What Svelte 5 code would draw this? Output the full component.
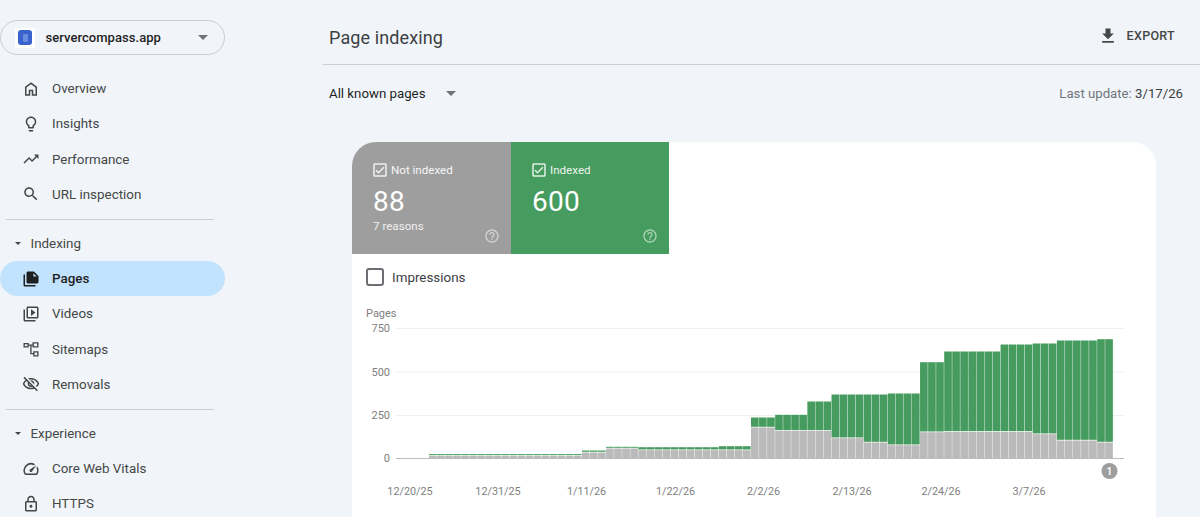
<script>
  const icons = {
    home: 'M6 19h3v-6h6v6h3v-9l-6-4.5L6 10Zm-2 2V9l8-6 8 6v12h-7v-6h-2v6Z',
    bulb: 'M9 21c0 .55.45 1 1 1h4c.55 0 1-.45 1-1v-1H9v1zm3-19C8.14 2 5 5.14 5 9c0 2.38 1.19 4.47 3 5.74V17c0 .55.45 1 1 1h6c.55 0 1-.45 1-1v-2.26c1.81-1.27 3-3.36 3-5.74 0-3.86-3.14-7-7-7zm2.85 11.1l-.85.6V16h-4v-2.3l-.85-.6C7.8 12.16 7 10.63 7 9c0-2.76 2.24-5 5-5s5 2.24 5 5c0 1.63-.8 3.16-2.15 4.1z',
    trend: 'M16 6l2.29 2.29-4.88 4.88-4-4L2 16.59 3.41 18l6-6 4 4 6.3-6.29L22 12V6z',
    search: 'M15.5 14h-.79l-.28-.27C15.41 12.59 16 11.11 16 9.5 16 5.91 13.09 3 9.5 3S3 5.91 3 9.5 5.91 16 9.5 16c1.61 0 3.09-.59 4.23-1.57l.27.28v.79l5 4.99L20.49 19l-4.99-5zm-6 0C7.01 14 5 11.99 5 9.5S7.01 5 9.5 5 14 7.01 14 9.5 11.99 14 9.5 14z',
    pages: 'M4 6H2v14c0 1.1.9 2 2 2h14v-2H4V6zm12-4H8c-1.1 0-2 .9-2 2v12c0 1.1.9 2 2 2h12c1.1 0 2-.9 2-2V8l-6-6zm-.8 6.8V4.4l4.4 4.4h-4.4z',
    video: 'M4 6H2v14c0 1.1.9 2 2 2h14v-2H4V6zm16-4H8c-1.1 0-2 .9-2 2v12c0 1.1.9 2 2 2h12c1.1 0 2-.9 2-2V4c0-1.1-.9-2-2-2zm0 14H8V4h12v12zM12 5.5v9l6-4.5z',
    sitemap: 'M2 4h7v6H2V4zm1.8 1.8v2.4h3.4V5.8H3.8zM14 3h8v7h-8V3zm1.8 1.8v3.4h4.4V4.8h-4.4zM15 15h7v7h-7v-7zm1.8 1.8v3.4h3.4v-3.4h-3.4zM9 6h5v1.8h-1.2V17.2H15V19h-4V7.8H9V6z',
    eyeoff: 'M12 6c3.79 0 7.17 2.13 8.82 5.5-.59 1.22-1.42 2.27-2.41 3.12l1.41 1.41c1.39-1.23 2.49-2.77 3.18-4.53C21.27 7.11 17 4 12 4c-1.27 0-2.49.2-3.64.57l1.65 1.65C10.66 6.09 11.32 6 12 6zm-1.07 1.14L13 9.21c.57.25 1.03.71 1.28 1.28l2.07 2.07c.08-.34.14-.7.14-1.07C16.5 9.01 14.48 7 12 7c-.37 0-.72.05-1.07.14zM2.01 3.87l2.68 2.68C3.06 7.83 1.77 9.53 1 11.5 2.73 15.89 7 19 12 19c1.52 0 2.98-.29 4.32-.82l3.42 3.42 1.41-1.41L3.42 2.45 2.01 3.87zm7.5 7.5l2.61 2.61c-.04.01-.08.02-.12.02-1.38 0-2.5-1.12-2.5-2.5 0-.05.01-.08.01-.13zm-3.4-3.4l1.75 1.75c-.23.55-.36 1.15-.36 1.78 0 2.48 2.02 4.5 4.5 4.5.63 0 1.23-.13 1.77-.36l.98.98c-.88.24-1.8.38-2.75.38-3.79 0-7.17-2.13-8.82-5.5.7-1.43 1.72-2.61 2.93-3.53z',
    speed: 'M20.38 8.57l-1.23 1.85a8 8 0 0 1-.22 7.58H5.07A8 8 0 0 1 15.58 6.85l1.85-1.23A10 10 0 0 0 3.35 19a2 2 0 0 0 1.72 1h13.85a2 2 0 0 0 1.74-1 10 10 0 0 0-.27-10.44zm-9.79 6.84a2 2 0 0 0 2.83 0l5.66-8.49-8.49 5.66a2 2 0 0 0 0 2.83z',
    lock: 'M18 8h-1V6c0-2.76-2.24-5-5-5S7 3.24 7 6v2H6c-1.1 0-2 .9-2 2v10c0 1.1.9 2 2 2h12c1.1 0 2-.9 2-2V10c0-1.1-.9-2-2-2zM9 6c0-1.66 1.34-3 3-3s3 1.34 3 3v2H9V6zm9 14H6V10h12v10zm-6-3c1.1 0 2-.9 2-2s-.9-2-2-2-2 .9-2 2 .9 2 2 2z'
  };
  const download = 'M19 9h-4V3H9v6H5l7 7 7-7zM5 18v2h14v-2H5z';
  const checked = 'M19 3H5c-1.1 0-2 .9-2 2v14c0 1.1.9 2 2 2h14c1.1 0 2-.9 2-2V5c0-1.1-.9-2-2-2zm0 16H5V5h14v14zM17.99 9l-1.41-1.42-6.59 6.59-2.58-2.57-1.42 1.41 4 3.99z';
  const help = 'M11 18h2v-2h-2v2zm1-16C6.48 2 2 6.48 2 12s4.48 10 10 10 10-4.48 10-10S17.52 2 12 2zm0 18c-4.41 0-8-3.59-8-8s3.59-8 8-8 8 3.59 8 8-3.59 8-8 8zm0-14c-2.21 0-4 1.79-4 4h2c0-1.1.9-2 2-2s2 .9 2 2c0 2-3 1.75-3 5h2c0-2.25 3-2.5 3-5 0-2.21-1.79-4-4-4z';

  const groupA = [
    { label: 'Overview', icon: icons.home },
    { label: 'Insights', icon: icons.bulb },
    { label: 'Performance', icon: icons.trend },
    { label: 'URL inspection', icon: icons.search }
  ];
  const groupB = [
    { label: 'Pages', icon: icons.pages, active: true },
    { label: 'Videos', icon: icons.video },
    { label: 'Sitemaps', icon: icons.sitemap },
    { label: 'Removals', icon: icons.eyeoff }
  ];
  const groupC = [
    { label: 'Core Web Vitals', icon: icons.speed },
    { label: 'HTTPS', icon: icons.lock }
  ];

  const segments = [
    [19, 4.4, 2.6], [3, 8, 6], [4, 11.7, 10], [10, 11.3, 8.3], [4, 12.3, 8.3],
    [3, 41, 31], [4, 43.7, 27.7], [3, 57, 27.7], [4, 64, 20.3], [3, 64, 16],
    [4, 65, 13.3], [3, 96.3, 26.3], [7, 107, 26.7], [4, 114, 26.7], [3, 115, 24.3],
    [5, 118, 18], [2, 119.3, 16]
  ];
  const step = 8.05;
  const x0 = 429;
  const base = 458.5;
  const bars = [];
  let n = 0;
  for (const [count, total, gray] of segments) {
    for (let i = 0; i < count; i++) {
      bars.push({ x: x0 + n * step, total, gray });
      n++;
    }
  }
  const grid = [
    { y: 328.5, label: '750' },
    { y: 372, label: '500' },
    { y: 415.5, label: '250' }
  ];
  const dates = [
    ['12/20/25', 410], ['12/31/25', 498], ['1/11/26', 586.5], ['1/22/26', 675.5],
    ['2/2/26', 763.5], ['2/13/26', 852], ['2/24/26', 941], ['3/7/26', 1029]
  ];
</script>

{#snippet navItem(item)}
  <div class="nav-item" class:active={item.active}>
    <svg class="nav-icon" viewBox="0 0 24 24"><path d={item.icon} /></svg>
    <span>{item.label}</span>
  </div>
{/snippet}

{#snippet section(title)}
  <div class="section">
    <span class="tri small"></span>
    <span>{title}</span>
  </div>
{/snippet}

<div class="page">
  <aside class="sidebar">
    <div class="property">
      <span class="favicon"><span class="favicon-inner"></span></span>
      <span class="property-name">servercompass.app</span>
      <span class="tri"></span>
    </div>
    <nav class="group first">
      {#each groupA as item}{@render navItem(item)}{/each}
    </nav>
    <hr />
    {@render section('Indexing')}
    <nav class="group">
      {#each groupB as item}{@render navItem(item)}{/each}
    </nav>
    <hr />
    {@render section('Experience')}
    <nav class="group">
      {#each groupC as item}{@render navItem(item)}{/each}
    </nav>
  </aside>

  <main class="main">
    <header class="head">
      <h1>Page indexing</h1>
      <div class="export">
        <svg viewBox="0 0 24 24"><path d={download} /></svg>
        <span>EXPORT</span>
      </div>
    </header>
    <div class="filter">
      <div class="select"><span>All known pages</span><span class="tri"></span></div>
      <div class="update">Last update: <b>3/17/26</b></div>
    </div>

    <section class="card">
      <div class="tiles">
        <div class="tile gray">
          <div class="tile-label">
            <svg viewBox="0 0 24 24"><path d={checked} /></svg>
            <span>Not indexed</span>
          </div>
          <div class="tile-value">88</div>
          <div class="tile-sub">7 reasons</div>
          <svg class="help" viewBox="0 0 24 24"><path d={help} /></svg>
        </div>
        <div class="tile green">
          <div class="tile-label">
            <svg viewBox="0 0 24 24"><path d={checked} /></svg>
            <span>Indexed</span>
          </div>
          <div class="tile-value">600</div>
          <svg class="help" viewBox="0 0 24 24"><path d={help} /></svg>
        </div>
      </div>
      <div class="impressions">
        <span class="box"></span>
        <span>Impressions</span>
      </div>
      <svg class="chart" viewBox="352 300 804 217" width="804" height="217">
        <text x="366" y="316.5" class="axis">Pages</text>
        {#each grid as g}
          <line x1="395" x2="1124" y1={g.y} y2={g.y} class="gridline" />
          <text x="390" y={g.y + 3.5} text-anchor="end" class="axis">{g.label}</text>
        {/each}
        <text x="390" y="462" text-anchor="end" class="axis">0</text>
        <line x1="396" x2="1124" y1={base} y2={base} class="zero" />
        {#each bars as b}
          <rect x={b.x} y={base - b.total} width={step - 0.4} height={b.total - b.gray - 0.7} class="bar-green" />
          <rect x={b.x} y={base - b.gray} width={step - 0.4} height={b.gray} class="bar-gray" />
        {/each}
        <circle cx="1109.5" cy="471" r="8" class="note" />
        <text x="1109.5" y="475" text-anchor="middle" class="note-text">1</text>
        {#each dates as d}
          <text x={d[1]} y="495" text-anchor="middle" class="axis date">{d[0]}</text>
        {/each}
      </svg>
    </section>
  </main>
</div>

<style>
  :global(body) {
    margin: 0;
    background: #f1f5fa;
    font-family: Roboto, 'Liberation Sans', sans-serif;
    color: #444746;
  }
  .page {
    display: flex;
    width: 1200px;
    height: 517px;
    overflow: hidden;
  }
  .sidebar {
    width: 225px;
    flex: none;
    padding-top: 20px;
  }
  .property {
    height: 33px;
    border: 1px solid #c9ccd0;
    border-radius: 18px;
    display: flex;
    align-items: center;
    padding-left: 14px;
    padding-right: 16px;
    width: 193px;
  }
  .favicon {
    width: 20px;
    height: 20px;
    background: #fff;
    display: flex;
    align-items: center;
    justify-content: center;
    flex: none;
  }
  .favicon-inner {
    position: relative;
    width: 14px;
    height: 15px;
    background: #3a62cf;
    border-radius: 3px;
  }
  .favicon-inner::after {
    content: '';
    position: absolute;
    left: 4.5px;
    top: 3.5px;
    width: 5px;
    height: 8px;
    background: #6b8de0;
    border-radius: 1px;
  }
  .property-name {
    margin-left: 10.5px;
    flex: 1;
    font-size: 13px;
    font-weight: 500;
    letter-spacing: 0.05px;
    color: #1f1f1f;
  }
  .tri {
    display: inline-block;
    width: 0;
    height: 0;
    border-left: 5px solid transparent;
    border-right: 5px solid transparent;
    border-top: 5px solid #6f7276;
  }
  .tri.small {
    border-left-width: 3.5px;
    border-right-width: 3.5px;
    border-top-width: 3.5px;
    border-top-color: #444746;
    margin-right: 9.5px;
  }
  .group.first {
    margin-top: 16px;
  }
  .nav-item {
    height: 35.25px;
    display: flex;
    align-items: center;
    padding-left: 22px;
    font-size: 13.4px;
    border-radius: 0 18px 18px 0;
  }
  .nav-item.active {
    background: #c2e3fd;
    color: #1f1f1f;
    font-weight: 500;
    border-radius: 18px;
  }
  .nav-icon {
    width: 18px;
    height: 18px;
    margin-right: 12px;
    fill: #444746;
    flex: none;
  }
  .nav-item.active .nav-icon {
    fill: #1f1f1f;
  }
  hr {
    border: 0;
    height: 1px;
    background: #cdd0d3;
    margin: 7px 11px 0 6px;
  }
  .section {
    height: 35px;
    margin-top: 6px;
    display: flex;
    align-items: center;
    padding-left: 15px;
    font-size: 13.4px;
  }
  .main {
    flex: 1;
    padding-left: 98px;
    min-width: 0;
  }
  .head {
    height: 65px;
    border-bottom: 1px solid #ccd0d4;
    display: flex;
    align-items: center;
    justify-content: space-between;
    padding: 10px 25px 0 6px;
    box-sizing: border-box;
  }
  h1 {
    margin: 0;
    font-size: 18px;
    font-weight: 400;
    color: #3c4043;
    letter-spacing: 0.12px;
  }
  .export {
    display: flex;
    align-items: center;
    gap: 9px;
    font-size: 12.5px;
    font-weight: 500;
    letter-spacing: 0.3px;
    margin-bottom: 3px;
  }
  .export svg {
    width: 20px;
    height: 20px;
    fill: #444746;
  }
  .filter {
    display: flex;
    justify-content: space-between;
    align-items: center;
    height: 56px;
    padding: 0 17px 0 6px;
  }
  .select {
    display: flex;
    align-items: center;
    gap: 21px;
    font-size: 13.25px;
    color: #1f1f1f;
  }
  .update {
    font-size: 13.2px;
    color: #70757a;
  }
  .update b {
    font-weight: 400;
    color: #3c4043;
  }
  .card {
    margin: 21px 44px 0 29px;
    background: #fff;
    border-radius: 24px 24px 0 0;
    overflow: hidden;
    height: 420px;
  }
  .tiles {
    display: flex;
  }
  .tile {
    position: relative;
    width: 159px;
    height: 112px;
    box-sizing: border-box;
    padding: 21px 21px 0;
    color: #fff;
  }
  .tile.gray {
    background: #9e9e9e;
  }
  .tile.green {
    background: #469c5e;
    width: 158px;
  }
  .tile-label {
    display: flex;
    align-items: center;
    gap: 2px;
    font-size: 11.6px;
    height: 14px;
  }
  .tile-label span {
    opacity: 0.9;
  }
  .tile-label svg {
    width: 18px;
    height: 18px;
    fill: #fff;
    margin-left: -2px;
    flex: none;
    opacity: 0.85;
  }
  .tile-value {
    font-size: 28px;
    line-height: 32px;
    margin-top: 9px;
    letter-spacing: 0.3px;
  }
  .tile-sub {
    font-size: 11.6px;
    line-height: 14px;
    margin-top: 1px;
    opacity: 0.85;
  }
  .help {
    position: absolute;
    right: 11px;
    bottom: 10.5px;
    width: 16px;
    height: 16px;
    fill: rgba(255, 255, 255, 0.55);
  }
  .impressions {
    display: flex;
    align-items: center;
    height: 46px;
    padding-left: 14px;
    gap: 8px;
    font-size: 13.4px;
    color: #3c4043;
  }
  .box {
    width: 14px;
    height: 14px;
    border: 2px solid #6b6e72;
    border-radius: 3px;
  }
  .chart {
    display: block;
  }
  .axis {
    font-size: 11px;
    fill: #808080;
  }
  .date {
    font-size: 10.8px;
  }
  .gridline {
    stroke: #f0f0f0;
    stroke-width: 1;
  }
  .zero {
    stroke: #bdbdbd;
    stroke-width: 1;
  }
  .bar-green {
    fill: #469c5e;
  }
  .bar-gray {
    fill: #bababa;
  }
  .note {
    fill: #9e9e9e;
  }
  .note-text {
    fill: #fff;
    font-size: 11px;
    font-weight: 500;
  }
</style>
